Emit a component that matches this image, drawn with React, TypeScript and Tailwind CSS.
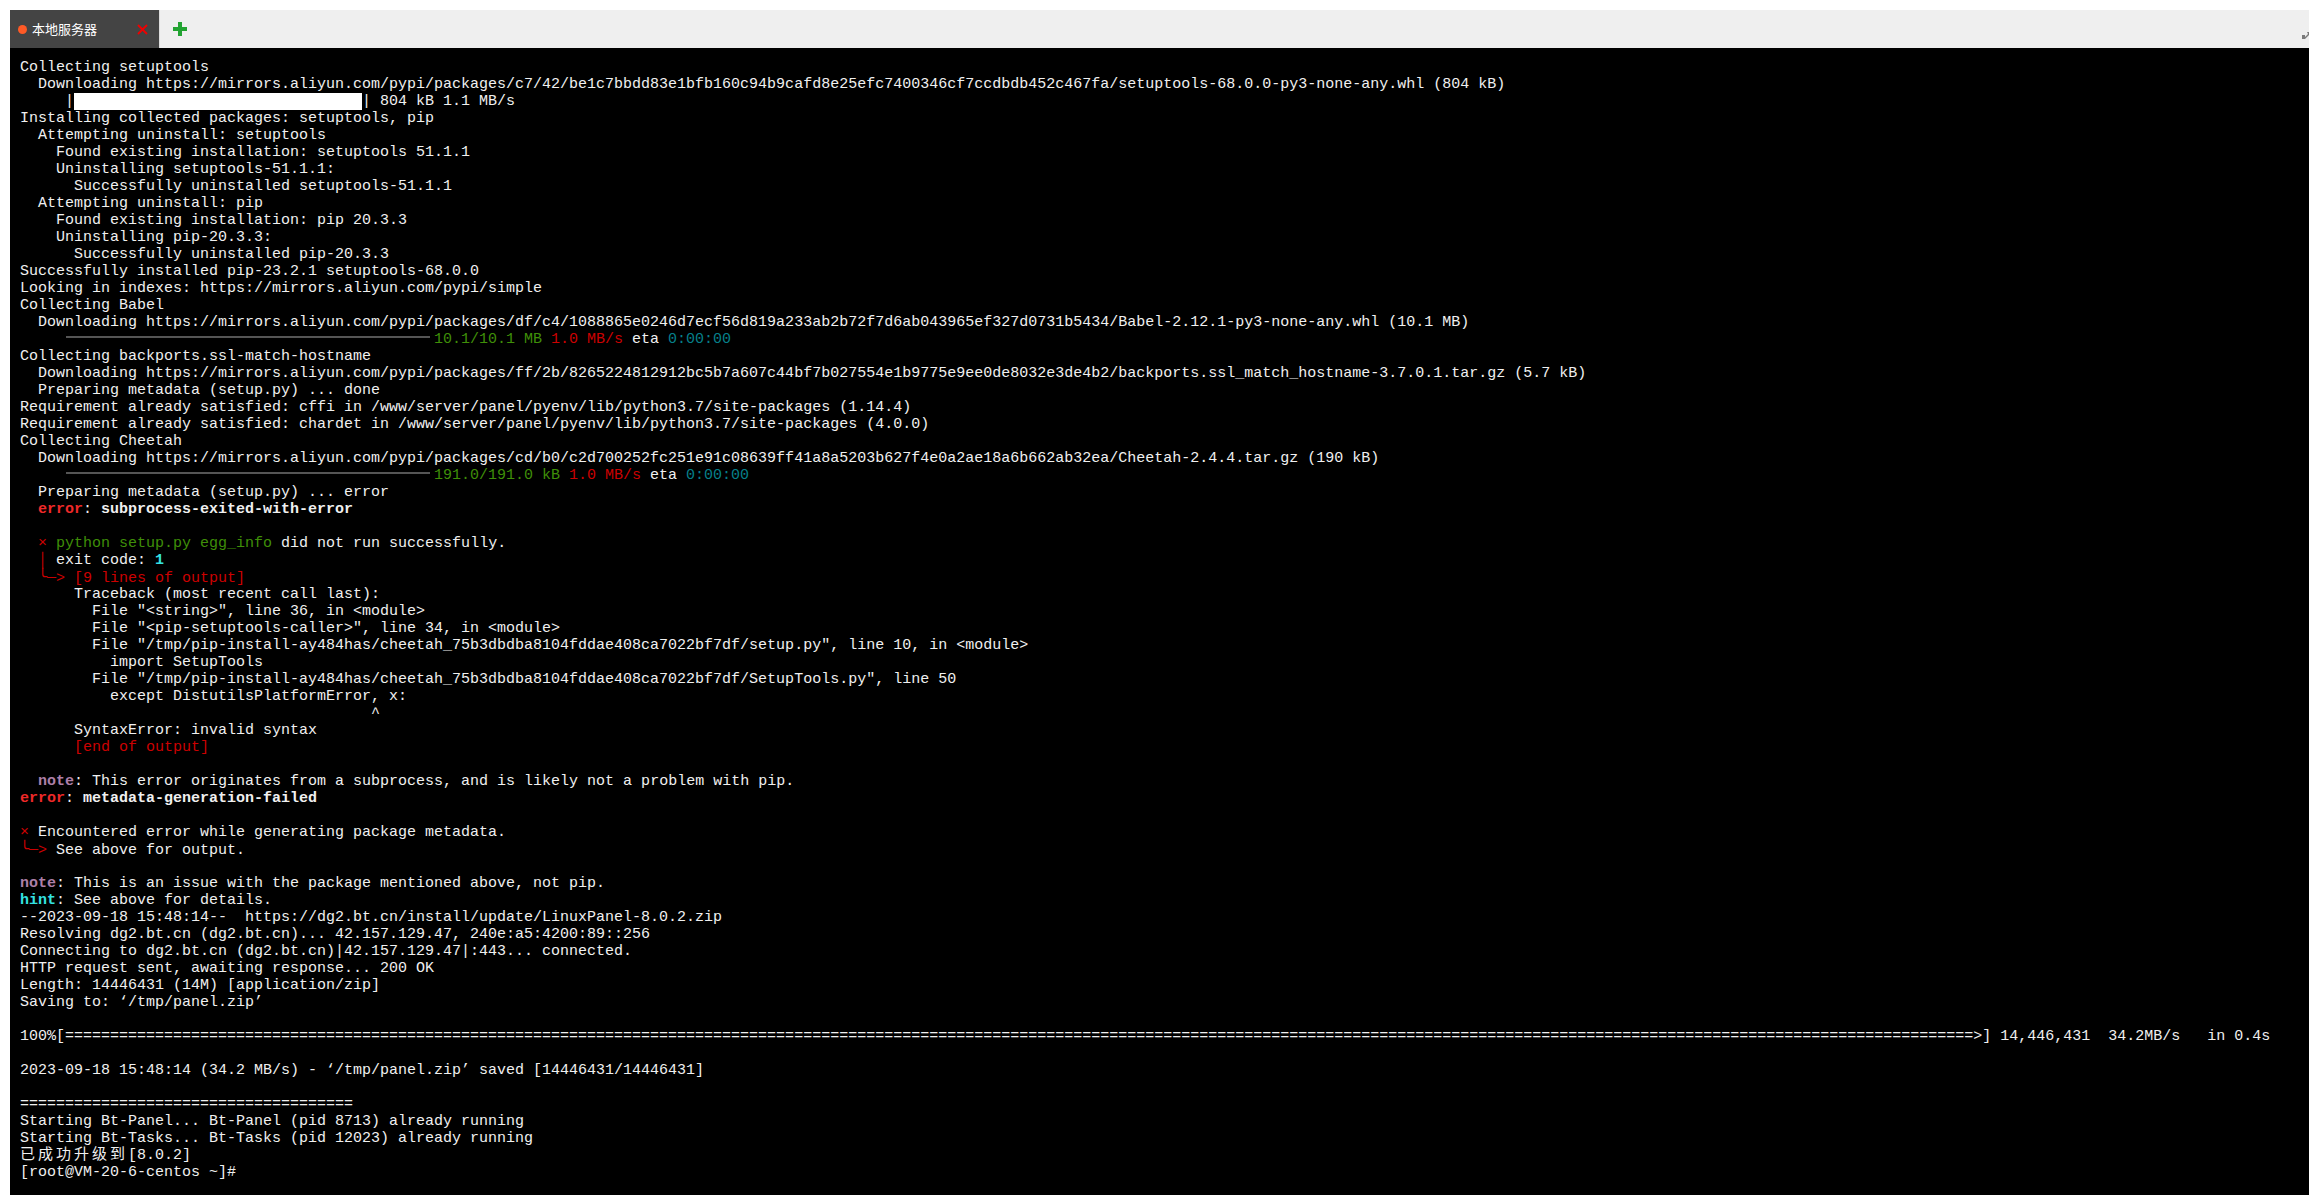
import type { ReactNode } from 'react';

const Red = ({ children }: { children: ReactNode }) => <span className="text-[#cc0000]">{children}</span>;
const Green = ({ children }: { children: ReactNode }) => <span className="text-[#3f8f08]">{children}</span>;
const Teal = ({ children }: { children: ReactNode }) => <span className="text-[#06808a]">{children}</span>;
const ErrorTag = () => <span className="font-bold text-[#ef2929]">error</span>;
const Note = () => <span className="font-bold text-[#ad7fa8]">note</span>;

// rounded corner is missing from Liberation Mono, keep it on the 9px grid
const Corner = () => (
  <span className="inline-block w-[9px] [font-family:'DejaVu_Sans_Mono',monospace]">╰</span>
);

// pip's finished progress bar, sits on the char grid (46 cols wide)
const PipBar = () => (
  <span className="ml-[46px] mr-[4px] inline-block h-[2px] w-[364px] bg-[#555555] align-[5px]" />
);

const ALI = 'https://mirrors.aliyun.com/pypi/packages';

const lines: ReactNode[] = [
  'Collecting setuptools',
  `  Downloading ${ALI}/c7/42/be1c7bbdd83e1bfb160c94b9cafd8e25efc7400346cf7ccdbdb452c467fa/setuptools-68.0.0-py3-none-any.whl (804 kB)`,
  <>
    {'     |'}
    <span className="inline-block h-[17px] w-[288px] bg-white align-top" />
    {'| 804 kB 1.1 MB/s'}
  </>,
  'Installing collected packages: setuptools, pip',
  '  Attempting uninstall: setuptools',
  '    Found existing installation: setuptools 51.1.1',
  '    Uninstalling setuptools-51.1.1:',
  '      Successfully uninstalled setuptools-51.1.1',
  '  Attempting uninstall: pip',
  '    Found existing installation: pip 20.3.3',
  '    Uninstalling pip-20.3.3:',
  '      Successfully uninstalled pip-20.3.3',
  'Successfully installed pip-23.2.1 setuptools-68.0.0',
  'Looking in indexes: https://mirrors.aliyun.com/pypi/simple',
  'Collecting Babel',
  `  Downloading ${ALI}/df/c4/1088865e0246d7ecf56d819a233ab2b72f7d6ab043965ef327d0731b5434/Babel-2.12.1-py3-none-any.whl (10.1 MB)`,
  <>
    <PipBar />
    <Green>10.1/10.1 MB</Green> <Red>1.0 MB/s</Red> eta <Teal>0:00:00</Teal>
  </>,
  'Collecting backports.ssl-match-hostname',
  `  Downloading ${ALI}/ff/2b/8265224812912bc5b7a607c44bf7b027554e1b9775e9ee0de8032e3de4b2/backports.ssl_match_hostname-3.7.0.1.tar.gz (5.7 kB)`,
  '  Preparing metadata (setup.py) ... done',
  'Requirement already satisfied: cffi in /www/server/panel/pyenv/lib/python3.7/site-packages (1.14.4)',
  'Requirement already satisfied: chardet in /www/server/panel/pyenv/lib/python3.7/site-packages (4.0.0)',
  'Collecting Cheetah',
  `  Downloading ${ALI}/cd/b0/c2d700252fc251e91c08639ff41a8a5203b627f4e0a2ae18a6b662ab32ea/Cheetah-2.4.4.tar.gz (190 kB)`,
  <>
    <PipBar />
    <Green>191.0/191.0 kB</Green> <Red>1.0 MB/s</Red> eta <Teal>0:00:00</Teal>
  </>,
  '  Preparing metadata (setup.py) ... error',
  <>
    {'  '}
    <ErrorTag />: <span className="font-bold">subprocess-exited-with-error</span>
  </>,
  '',
  <>
    {'  '}
    <Red>×</Red> <Green>python setup.py egg_info</Green> did not run successfully.
  </>,
  <>
    {'  '}
    <Red>│</Red> exit code: <span className="font-bold text-[#34e2e2]">1</span>
  </>,
  <>
    {'  '}
    <Red>
      <Corner />
      ─&gt; [9 lines of output]
    </Red>
  </>,
  '      Traceback (most recent call last):',
  '        File "<string>", line 36, in <module>',
  '        File "<pip-setuptools-caller>", line 34, in <module>',
  '        File "/tmp/pip-install-ay484has/cheetah_75b3dbdba8104fddae408ca7022bf7df/setup.py", line 10, in <module>',
  '          import SetupTools',
  '        File "/tmp/pip-install-ay484has/cheetah_75b3dbdba8104fddae408ca7022bf7df/SetupTools.py", line 50',
  '          except DistutilsPlatformError, x:',
  `${' '.repeat(39)}^`,
  '      SyntaxError: invalid syntax',
  <>
    {'      '}
    <Red>[end of output]</Red>
  </>,
  '',
  <>
    {'  '}
    <Note />: This error originates from a subprocess, and is likely not a problem with pip.
  </>,
  <>
    <ErrorTag />: <span className="font-bold">metadata-generation-failed</span>
  </>,
  '',
  <>
    <Red>×</Red> Encountered error while generating package metadata.
  </>,
  <>
    <Red>
      <Corner />
      ─&gt;
    </Red>{' '}
    See above for output.
  </>,
  '',
  <>
    <Note />: This is an issue with the package mentioned above, not pip.
  </>,
  <>
    <span className="font-bold text-[#34e2e2]">hint</span>: See above for details.
  </>,
  '--2023-09-18 15:48:14--  https://dg2.bt.cn/install/update/LinuxPanel-8.0.2.zip',
  'Resolving dg2.bt.cn (dg2.bt.cn)... 42.157.129.47, 240e:a5:4200:89::256',
  'Connecting to dg2.bt.cn (dg2.bt.cn)|42.157.129.47|:443... connected.',
  'HTTP request sent, awaiting response... 200 OK',
  'Length: 14446431 (14M) [application/zip]',
  'Saving to: ‘/tmp/panel.zip’',
  '',
  `100%[${'='.repeat(212)}>] 14,446,431  34.2MB/s   in 0.4s`,
  '',
  '2023-09-18 15:48:14 (34.2 MB/s) - ‘/tmp/panel.zip’ saved [14446431/14446431]',
  '',
  '='.repeat(37),
  'Starting Bt-Panel... Bt-Panel (pid 8713) already running',
  'Starting Bt-Tasks... Bt-Tasks (pid 12023) already running',
  <>
    <span className="tracking-[3px]">已成功升级到</span>[8.0.2]
  </>,
  '[root@VM-20-6-centos ~]#',
];

export default function App() {
  return (
    <div className="flex h-[1204px] w-full flex-col overflow-hidden bg-white pb-[9px] pl-[10px] pt-[10px]">
      {/* Tab bar */}
      <div className="flex h-[38px] shrink-0 items-center bg-[#efefef]">
        <div className="flex h-full w-[150px] items-center border-r border-[#dddddd] bg-[#444444] pl-[8px]">
          <span className="h-[9px] w-[9px] rounded-full bg-[#ff5a26]" />
          <span className="ml-[5px] text-[13px] text-white [font-family:'Noto_Sans_CJK_SC',sans-serif]">本地服务器</span>
          <svg className="ml-[40px]" width="11" height="11" viewBox="0 0 11 11" fill="none">
            <path d="M1 1l9 9M10 1l-9 9" stroke="#f00000" strokeWidth="1.8" />
          </svg>
        </div>
        <svg className="ml-[13px]" width="14" height="14" viewBox="0 0 14 14">
          <path d="M5 0h4v5h5v4H9v5H5V9H0V5h5z" fill="#22a332" />
        </svg>
        <div className="ml-auto mb-[-14px] w-[7px] overflow-hidden">
          <svg width="12" height="8" viewBox="0 0 12 8">
            <path d="M0 3h3v2l3-3-1-2h3v4l-1-1-4 4H0z" fill="#7a7a7a" />
          </svg>
        </div>
      </div>

      {/* Terminal */}
      <div className="flex-1 overflow-hidden bg-black pl-[10px] pt-[11px] text-[15px] leading-[17px] text-[#f0f0f0] [font-family:'Liberation_Mono','Noto_Sans_CJK_SC',monospace]">
        {lines.map((line, i) => (
          <div key={i} className="h-[17px] whitespace-pre">
            {line}
          </div>
        ))}
      </div>
    </div>
  );
}
